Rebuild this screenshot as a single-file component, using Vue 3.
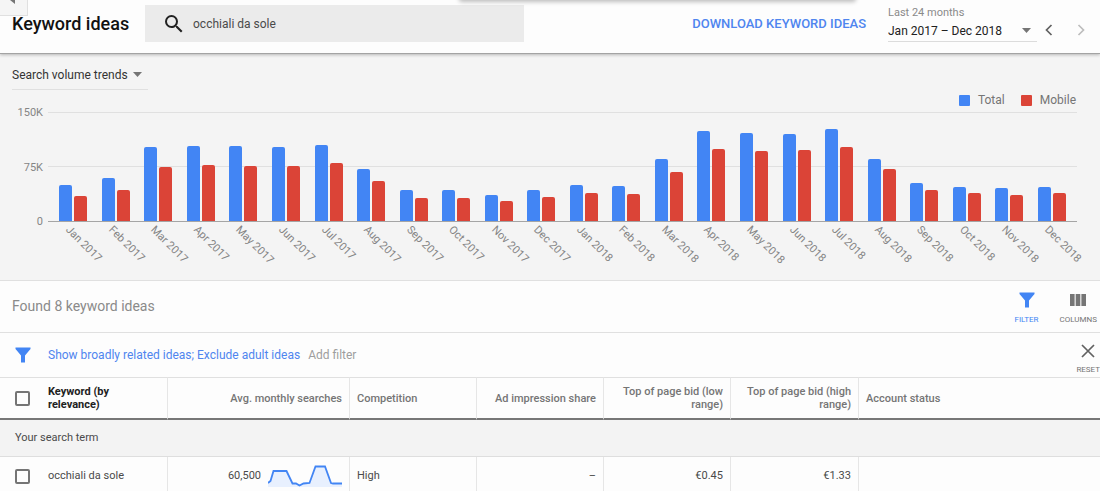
<script setup>
import { ref } from 'vue'

const query = ref('occhiali da sole')
const MAX = 150

const months = [
  ['Jan 2017', 49.5, 34.5], ['Feb 2017', 59, 42.5], ['Mar 2017', 102, 74.5],
  ['Apr 2017', 103.5, 77], ['May 2017', 103.5, 76], ['Jun 2017', 102, 76],
  ['Jul 2017', 105, 80], ['Aug 2017', 72, 55.5], ['Sep 2017', 43, 32],
  ['Oct 2017', 42, 32], ['Nov 2017', 36, 27], ['Dec 2017', 42, 33.5],
  ['Jan 2018', 49.5, 38], ['Feb 2018', 48, 37], ['Mar 2018', 86, 67],
  ['Apr 2018', 123.5, 99.5], ['May 2018', 121, 96], ['Jun 2018', 119.5, 97.5],
  ['Jul 2018', 126, 102], ['Aug 2018', 86, 71], ['Sep 2018', 52, 43],
  ['Oct 2018', 47, 38], ['Nov 2018', 46, 36], ['Dec 2018', 47, 38],
].map(([label, total, mobile]) => ({ label, total, mobile }))

const pct = (v) => `${(v / MAX) * 100}%`
</script>

<template>
  <div class="page">
    <button class="back-tab" aria-label="Collapse">
      <svg width="5" height="8" viewBox="0 0 5 8"><path d="M5 0v8L0 4z" fill="#757575" /></svg>
    </button>
    <div class="floating-card"></div>

    <header class="topbar">
      <h1>Keyword ideas</h1>
      <div class="search">
        <svg width="24" height="24" viewBox="0 0 24 24">
          <path fill="#212121" d="M15.5 14h-.79l-.28-.27A6.47 6.47 0 0 0 16 9.5 6.5 6.5 0 1 0 9.5 16c1.61 0 3.09-.59 4.23-1.57l.27.28v.79l5 4.99L20.49 19l-4.99-5zm-6 0C7.01 14 5 11.99 5 9.5S7.01 5 9.5 5 14 7.01 14 9.5 11.99 14 9.5 14z" />
        </svg>
        <input v-model="query" type="text" aria-label="Search keywords" />
      </div>
      <button class="download">DOWNLOAD KEYWORD IDEAS</button>
      <div class="period">
        <label for="period">Last 24 months</label>
        <div class="select-wrap">
          <select id="period"><option>Jan 2017 – Dec 2018</option></select>
          <svg class="caret" width="9" height="5" viewBox="0 0 9 5"><path d="M0 0h9L4.500 5z" fill="#757575" /></svg>
        </div>
      </div>
      <button class="chev" aria-label="Previous period">
        <svg width="8" height="12" viewBox="0 0 8 12"><path d="M6.500 1l-5 5 5 5" fill="none" stroke="#616161" stroke-width="1.700" /></svg>
      </button>
      <button class="chev next" aria-label="Next period">
        <svg width="8" height="12" viewBox="0 0 8 12"><path d="M1.500 1l5 5-5 5" fill="none" stroke="#bdbdbd" stroke-width="1.700" /></svg>
      </button>
    </header>

    <section class="trends">
      <div class="select-wrap metric">
        <select aria-label="Chart metric"><option>Search volume trends</option></select>
        <svg class="caret" width="9" height="5" viewBox="0 0 9 5"><path d="M0 0h9L4.500 5z" fill="#757575" /></svg>
      </div>
      <div class="legend">
        <span><i class="total"></i>Total</span>
        <span><i class="mobile"></i>Mobile</span>
      </div>
      <div class="chart">
        <div class="axis"><span>150K</span><span>75K</span><span>0</span></div>
        <div class="plot">
          <div v-for="m in months" :key="m.label" class="month">
            <div class="bar total" :style="{ height: pct(m.total) }"></div>
            <div class="bar mobile" :style="{ height: pct(m.mobile) }"></div>
            <span class="tick">{{ m.label }}</span>
          </div>
        </div>
      </div>
    </section>

    <section class="found">
      <h2>Found 8 keyword ideas</h2>
      <button class="tool active">
        <svg width="16" height="16" viewBox="0 0 16 16"><path d="M.5.500h15V2L10 8.500V15.500H6V8.500L.5 2z" fill="#4285f4" /></svg>
        FILTER
      </button>
      <button class="tool">
        <svg width="16" height="16" viewBox="0 0 16 16"><path d="M0 2h4.600v12H0zM5.700 2h4.600v12H5.700zM11.400 2H16v12h-4.600z" fill="#757575" /></svg>
        COLUMNS
      </button>
    </section>

    <section class="filters">
      <svg class="funnel" width="16" height="16" viewBox="0 0 16 16"><path d="M.5.500h15V2L10 8.500V15.500H6V8.500L.5 2z" fill="#4285f4" /></svg>
      <a href="#">Show broadly related ideas; Exclude adult ideas</a>
      <button class="add">Add filter</button>
      <button class="tool reset">
        <svg width="14" height="14" viewBox="0 0 14 14"><path d="M1 1l12 12M13 1L1 13" stroke="#616161" stroke-width="1.700" /></svg>
        RESET
      </button>
    </section>

    <table>
      <colgroup>
        <col class="c-check" /><col class="c-key" /><col class="c-avg" /><col class="c-mid" />
        <col class="c-mid" /><col class="c-mid" /><col class="c-high" /><col />
      </colgroup>
      <thead>
        <tr>
          <th class="check"><input type="checkbox" aria-label="Select all keywords" /></th>
          <th class="key">Keyword (by relevance)</th>
          <th class="num">Avg. monthly searches</th>
          <th>Competition</th>
          <th class="num">Ad impression share</th>
          <th class="num">Top of page bid (low range)</th>
          <th class="num">Top of page bid (high range)</th>
          <th>Account status</th>
        </tr>
      </thead>
      <tbody>
        <tr class="group"><td colspan="8">Your search term</td></tr>
        <tr>
          <td class="check"><input type="checkbox" aria-label="Select occhiali da sole" /></td>
          <td class="key">occhiali da sole</td>
          <td class="num">
            <div class="volume">
              60,500
              <svg width="74" height="22" viewBox="0 0 74 22">
                <path d="M0 18l2.500-2L5.500 6h13l6 12.500H28l3.500 2 4-2 6-.5L47.500 1.500H57L63 18l2 .5h9V22H0z" fill="#e8f0fe" />
                <path d="M0 18l2.500-2L5.500 6h13l6 12.500H28l3.500 2 4-2 6-.5L47.500 1.500H57L63 18l2 .5h9" fill="none" stroke="#4285f4" stroke-width="1.800" />
              </svg>
            </div>
          </td>
          <td>High</td>
          <td class="num">–</td>
          <td class="num">€0.45</td>
          <td class="num">€1.33</td>
          <td></td>
        </tr>
      </tbody>
    </table>
  </div>
</template>

<style>
body { margin: 0; background: #fdfdfd; }
</style>

<style scoped>
.page {
  position: relative;
  height: 100vh;
  overflow: hidden;
  background: #fdfdfd;
  color: #4a4a4a;
  font: 12px/14px Roboto, "Liberation Sans", sans-serif;
}
.page * { box-sizing: border-box; }
button, select, input { font: inherit; color: inherit; border: 0; padding: 0; margin: 0; background: none; }
button { cursor: pointer; }
svg { display: block; flex: none; }

.back-tab {
  position: absolute;
  top: 0;
  left: 0;
  width: 28px;
  height: 16px;
  padding-left: 10px;
  background: #f5f5f5;
  border: solid #e0e0e0;
  border-width: 0 1px 1px 0;
  overflow: hidden;
}
.back-tab svg { margin-top: -12px; }
.floating-card {
  position: absolute;
  z-index: 2;
  top: -10px;
  left: 460px;
  right: 245px;
  height: 10px;
  border-radius: 2px;
  box-shadow: 0 1px 4px 1px rgba(0, 0, 0, 0.25);
}

.topbar {
  position: relative;
  z-index: 1;
  display: flex;
  align-items: flex-start;
  height: 54px;
  padding: 5px 15px 0 12px;
  border-bottom: 1px solid #a3a3a3;
  box-shadow: 0 1px 3px rgba(0, 0, 0, 0.25);
}
h1 { flex: none; width: 133px; margin: 0; font-size: 18px; line-height: 38px; font-weight: 500; color: #111; }
.search { flex: 0 1 379px; display: flex; align-items: center; gap: 7px; height: 37px; padding-left: 17px; background: #ebebeb; }
.search input { flex: 1; min-width: 0; outline: 0; font-size: 12px; }
.download { margin-left: auto; line-height: 38px; font-size: 13px; font-weight: 500; color: #4f85ef; white-space: nowrap; }
.period { flex: none; width: 149px; margin-left: 22px; color: #212121; }
.period label { display: block; font-size: 11px; line-height: 15px; color: #8a8a8a; }
.select-wrap { position: relative; border-bottom: 1px solid #dcdcdc; }
.select-wrap select { display: block; width: 100%; height: 21px; appearance: none; outline: 0; }
.caret { position: absolute; right: 6px; top: 8px; pointer-events: none; }
.chev { margin: 19px 0 0 8px; }
.chev.next { margin-left: 24px; }

.trends { position: relative; height: 226px; padding: 10px 23px 0 12px; background: #f4f4f4; color: #858585; }
.metric { width: 136px; height: 26px; color: #333; border-color: #e0e0e0; }
.legend { display: flex; justify-content: flex-end; gap: 16px; height: 22px; padding: 2px 1px 0 0; line-height: 16px; }
.legend span { display: flex; align-items: center; gap: 8px; height: 16px; font-size: 12px; color: #757575; }
.legend i { width: 11px; height: 11px; border-radius: 1px; }
.total { background: #4285f4; }
.mobile { background: #db4437; }
.chart { display: flex; height: 110px; font-size: 11px; }
.axis { display: flex; flex-direction: column; justify-content: space-between; width: 31px; margin: -6px 5px -7px 0; text-align: right; }
.plot {
  flex: 1;
  display: flex;
  padding: 0 4px;
  border-bottom: 1px solid #a5a5a5;
  background: linear-gradient(#e0e0e0, #e0e0e0) 0 0 / 100% 1px no-repeat, linear-gradient(#e0e0e0, #e0e0e0) 0 50% / 100% 1px no-repeat;
}
.month { position: relative; flex: 1; display: flex; justify-content: center; align-items: flex-end; gap: 2px; }
.bar { width: 13px; border-radius: 2px 2px 0 0; }
.tick { position: absolute; top: 100%; left: 50%; padding-left: 1px; line-height: 18px; white-space: nowrap; transform-origin: 0 0; transform: rotate(45deg); }

.found { display: flex; align-items: flex-start; height: 53px; padding-right: 3px; border: solid #e0e0e0; border-width: 1px 0; }
h2 { margin: 0 auto 0 12px; font-size: 14px; line-height: 51px; font-weight: 400; color: #8a8a8a; }
.tool { display: flex; flex-direction: column; align-items: center; gap: 7px; margin-top: 11px; font-size: 8px; line-height: 10px; color: #757575; }
.tool + .tool { margin-left: 21px; }
.tool.active { color: #4285f4; }

.filters { display: flex; align-items: center; height: 44px; padding: 0 0 0 15px; }
.filters a { margin: 0 8px 0 17px; color: #4f85ef; text-decoration: none; }
.add { color: #9e9e9e; }
.tool.reset { align-self: flex-start; margin: 11px 0 0 auto; }

table { width: 100%; table-layout: fixed; border-collapse: separate; border-spacing: 0; font-size: 11px; }
.c-check { width: 41px; }
.c-key { width: 127px; }
.c-avg { width: 182px; }
.c-mid { width: 127px; }
.c-high { width: 128px; }
th, td { height: 38px; padding: 0 7px; text-align: left; vertical-align: middle; border-right: 1px solid #e6e6e6; }
th { height: 43px; line-height: 13px; font-weight: 500; color: #757575; border-top: 1px solid #e0e0e0; border-bottom: 2px solid #777; }
th:last-child, td:last-child, .check { border-right: 0; }
.check { padding: 0 0 0 15px; }
th.key { color: #212121; font-weight: 700; padding-right: 40px; }
.num { text-align: right; }
.group td { height: 37px; padding-left: 15px; background: #f3f3f3; border-bottom: 1px solid #dedede; }
.volume { display: flex; align-items: center; justify-content: flex-end; gap: 7px; }
input[type="checkbox"] { display: block; width: 15px; height: 15px; appearance: none; border: 2px solid #757575; border-radius: 2px; }
</style>
